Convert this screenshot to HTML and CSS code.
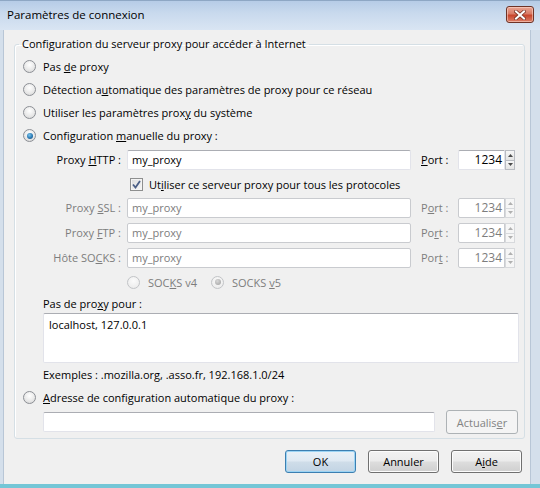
FILE: index.html
```html
<!DOCTYPE html>
<html lang="fr">
<head>
<meta charset="utf-8">
<title>Paramètres de connexion</title>
<link rel="stylesheet" href="styles.css">
</head>
<body>
<div class="window">
  <div class="titlebar">
    <span class="title">Paramètres de connexion</span>
    <span class="close">
      <svg width="12" height="10" viewBox="0 0 12 10">
        <path d="M2 1.5 L10 8.5 M10 1.5 L2 8.5" stroke="#7a3426" stroke-width="3.6" stroke-linecap="square"/>
        <path d="M2 1.5 L10 8.5 M10 1.5 L2 8.5" stroke="#ffffff" stroke-width="2" stroke-linecap="square"/>
      </svg>
    </span>
  </div>
  <div class="frame">
    <div class="client">
      <fieldset class="group">
        <legend>Configuration du serveur proxy pour accéder à Internet</legend>
        <div class="opt"><span class="radio"></span><span>Pas <u>d</u>e proxy</span></div>
        <div class="opt"><span class="radio"></span><span>Détection a<u>u</u>tomatique des paramètres de proxy pour ce réseau</span></div>
        <div class="opt"><span class="radio"></span><span>Utiliser les paramètres prox<u>y</u> du système</span></div>
        <div class="opt"><span class="radio on"><span class="dot"></span></span><span>Configuration <u>m</u>anuelle du proxy :</span></div>

        <div class="proxy-grid">
          <span class="plabel">Proxy <u>H</u>TTP :</span>
          <span class="field">my_proxy</span>
          <span class="port-label"><u>P</u>ort :</span>
          <span class="port"><span class="port-input">1234</span><span class="spin"><span class="sb"><svg width="5" height="3" viewBox="0 0 5 3"><path d="M0 3 L2.5 0 L5 3Z" fill="#4a4a4a"/></svg></span><span class="sb"><svg width="5" height="3" viewBox="0 0 5 3"><path d="M0 0 L2.5 3 L5 0Z" fill="#4a4a4a"/></svg></span></span></span>

          <span class="check-row"><span class="checkbox"><svg width="9" height="9" viewBox="0 0 9 9"><path d="M1 4.5 L3.5 7.5 L8 1" fill="none" stroke="#4b5f86" stroke-width="1.8"/></svg></span><span>Ut<u>i</u>liser ce serveur proxy pour tous les protocoles</span></span>

          <span class="plabel dis">Proxy <u>S</u>SL :</span>
          <span class="field dis">my_proxy</span>
          <span class="port-label dis">P<u>o</u>rt :</span>
          <span class="port dis"><span class="port-input">1234</span><span class="spin"><span class="sb"><svg width="5" height="3" viewBox="0 0 5 3"><path d="M0 3 L2.5 0 L5 3Z" fill="#b0b0b0"/></svg></span><span class="sb"><svg width="5" height="3" viewBox="0 0 5 3"><path d="M0 0 L2.5 3 L5 0Z" fill="#b0b0b0"/></svg></span></span></span>

          <span class="plabel dis">Proxy <u>F</u>TP :</span>
          <span class="field dis">my_proxy</span>
          <span class="port-label dis">Po<u>r</u>t :</span>
          <span class="port dis"><span class="port-input">1234</span><span class="spin"><span class="sb"><svg width="5" height="3" viewBox="0 0 5 3"><path d="M0 3 L2.5 0 L5 3Z" fill="#b0b0b0"/></svg></span><span class="sb"><svg width="5" height="3" viewBox="0 0 5 3"><path d="M0 0 L2.5 3 L5 0Z" fill="#b0b0b0"/></svg></span></span></span>

          <span class="plabel dis">Hôte SO<u>C</u>KS :</span>
          <span class="field dis">my_proxy</span>
          <span class="port-label dis">Por<u>t</u> :</span>
          <span class="port dis"><span class="port-input">1234</span><span class="spin"><span class="sb"><svg width="5" height="3" viewBox="0 0 5 3"><path d="M0 3 L2.5 0 L5 3Z" fill="#b0b0b0"/></svg></span><span class="sb"><svg width="5" height="3" viewBox="0 0 5 3"><path d="M0 0 L2.5 3 L5 0Z" fill="#b0b0b0"/></svg></span></span></span>
        </div>

        <div class="socks-row">
          <span class="sopt v4"><span class="radio dis"></span><span>SOC<u>K</u>S v4</span></span>
          <span class="sopt"><span class="radio dis on"><span class="dot"></span></span><span>SOCKS <u>v</u>5</span></span>
        </div>

        <div class="noproxy">
          <div class="np-label">Pas de pro<u>x</u>y pour :</div>
          <div class="textarea">localhost, 127.0.0.1</div>
          <div class="examples">Exemples : .mozilla.org, .asso.fr, 192.168.1.0/24</div>
        </div>

        <div class="opt auto"><span class="radio"></span><span><u>A</u>dresse de configuration automatique du proxy :</span></div>
        <div class="auto-row">
          <span class="field wide"></span>
          <span class="btn disabled">Actualis<u>e</u>r</span>
        </div>
      </fieldset>

      <div class="buttons">
        <span class="btn default">OK</span>
        <span class="btn">Annuler</span>
        <span class="btn">A<u>i</u>de</span>
      </div>
    </div>
  </div>
</div>
</body>
</html>
```

FILE: styles.css
```css
* { box-sizing: border-box; }

body {
  margin: 0;
  width: 540px;
  height: 488px;
  overflow: hidden;
  font-family: "Open Sans", "Noto Sans", sans-serif;
  font-size: 11px;
  color: #1b1b1b;
  background: #cbdaec;
}

u { text-decoration: underline; text-underline-offset: 1px; }

.window {
  width: 540px;
  height: 488px;
  display: flex;
  flex-direction: column;
  border-bottom: 4px solid #74c6d6;
  background: #c9d9ec;
}

.titlebar {
  height: 30px;
  flex: none;
  display: flex;
  justify-content: space-between;
  align-items: flex-start;
  padding: 5px 6px 0 7px;
  background: linear-gradient(#b6cce7 0%, #c8d9ed 40%, #d9e5f3 100%);
  border-top: 1px solid #8ea7c4;
}

.title {
  font-size: 11.5px;
  line-height: 18px;
  color: #000;
}

.close {
  width: 28px;
  height: 17px;
  border: 1px solid #6e3327;
  border-radius: 3px;
  background: linear-gradient(#e9a594 0%, #d97b66 45%, #c8452c 55%, #dc7f68 100%);
  box-shadow: inset 0 0 0 1px rgba(255, 220, 210, 0.55);
  display: flex;
  align-items: center;
  justify-content: center;
}

.frame {
  flex: 1;
  padding: 0 9px 0 3px;
  background: #d4dfeb;
}

.client {
  height: 100%;
  background: #f0f0f0;
  padding: 6px 7px 0 10px;
  border-left: 1px solid #b8c6d6;
  border-right: 1px solid #b8c6d6;
}

/* group box */
.group {
  margin: 0;
  width: 511px;
  height: 403px;
  padding: 3px 4px 0 8px;
  border: 1px solid #d5dfe5;
  border-radius: 3px;
  box-shadow: inset 1px 1px 0 #fff;
}

.group legend {
  margin-left: -4px;
  padding: 0 3px;
  line-height: 16px;
  color: #000;
}

.opt {
  height: 23px;
  display: flex;
  align-items: center;
  gap: 7px;
  color: #000;
}

.radio {
  width: 13px;
  height: 13px;
  flex: none;
  border-radius: 50%;
  border: 1px solid #8c8f95;
  background: radial-gradient(circle at 50% 35%, #ffffff 0%, #e9e9e9 55%, #d3d3d3 100%);
  display: flex;
  align-items: center;
  justify-content: center;
}

.radio .dot {
  width: 6px;
  height: 6px;
  border-radius: 50%;
  background: radial-gradient(circle at 40% 35%, #7cc6ee 0%, #2a79b4 55%, #15466f 100%);
}

.radio.dis {
  border-color: #c2c4c7;
  background: radial-gradient(circle at 50% 35%, #fbfbfb 0%, #eeeeee 70%, #e4e4e4 100%);
}

.radio.dis .dot {
  background: radial-gradient(circle at 40% 35%, #d8d8d8 0%, #b5b5b5 60%, #9d9d9d 100%);
}

/* proxy grid */
.proxy-grid {
  margin-top: 3px;
  display: grid;
  grid-template-columns: 104px 284px 47px 57px;
  grid-template-rows: 20px 18px 20px 20px 20px;
  row-gap: 5px;
}

.plabel {
  text-align: right;
  padding-right: 6px;
  line-height: 20px;
  color: #000;
  white-space: nowrap;
}

.port-label {
  padding-left: 10px;
  line-height: 20px;
  color: #000;
}

.dis { color: #7d7d7d; }
.plabel.dis, .port-label.dis { color: #7d7d7d; }

.field {
  height: 20px;
  line-height: 18px;
  padding-left: 4px;
  background: #fff;
  border: 1px solid #e2e3ea;
  border-top-color: #abadb3;
  border-radius: 2px;
  color: #000;
}

.field.dis {
  border-color: #c9cbcf;
  background: #fff;
  color: #7d7d7d;
}

.port {
  display: flex;
  height: 20px;
}

.port-input {
  width: 47px;
  height: 20px;
  line-height: 18px;
  text-align: right;
  padding-right: 2px;
  font-size: 12px;
  background: #fff;
  border: 1px solid #e2e3ea;
  border-top-color: #abadb3;
  border-radius: 2px 0 0 2px;
  color: #000;
}

.port.dis .port-input {
  border-color: #c9cbcf;
  color: #7d7d7d;
}

.spin {
  width: 10px;
  display: flex;
  flex-direction: column;
}

.sb {
  flex: 1;
  display: flex;
  align-items: center;
  justify-content: center;
  border: 1px solid #b9bcc2;
  background: linear-gradient(#f7f7f7, #e4e4e4);
}

.sb + .sb { border-top: none; }

.port.dis .sb {
  border-color: #d7d9dc;
  background: #f6f6f6;
}

.check-row {
  grid-column: 2 / 5;
  display: flex;
  align-items: center;
  gap: 6px;
  padding-left: 3px;
  color: #000;
}

.checkbox {
  width: 13px;
  height: 13px;
  flex: none;
  border: 1px solid #8e8f8f;
  background: linear-gradient(135deg, #dcdcdc, #f7f7f7);
  box-shadow: inset 0 0 0 1px #f4f4f4;
  display: flex;
  align-items: center;
  justify-content: center;
}

/* socks */
.socks-row {
  height: 28px;
  display: flex;
  align-items: center;
  padding-left: 104px;
  color: #7d7d7d;
}

.sopt {
  display: flex;
  align-items: center;
  gap: 8px;
}

.sopt.v4 { width: 84px; }

/* no proxy */
.noproxy {
  padding-left: 20px;
}

.np-label {
  line-height: 16px;
  color: #000;
}

.textarea {
  margin-top: 1px;
  width: 476px;
  height: 50px;
  padding: 3px 5px;
  line-height: 16px;
  background: #fff;
  border: 1px solid #e2e3ea;
  border-top-color: #abadb3;
  border-radius: 2px;
  color: #000;
}

.examples {
  height: 23px;
  line-height: 23px;
  color: #000;
}

.opt.auto { height: 22px; }

.auto-row {
  margin-top: 2px;
  padding-left: 20px;
  display: flex;
  align-items: center;
  gap: 11px;
}

.field.wide { width: 392px; }

/* buttons */
.btn {
  display: flex;
  align-items: center;
  justify-content: center;
  width: 71px;
  height: 23px;
  border: 1px solid #707070;
  border-radius: 3px;
  background: linear-gradient(#f2f2f2 0%, #ebebeb 48%, #dddddd 52%, #cfcfcf 100%);
  box-shadow: inset 0 0 0 1px #fcfcfc;
  color: #000;
}

.btn.disabled {
  width: 72px;
  height: 24px;
  border-color: #adb2b5;
  background: #f4f4f4;
  box-shadow: none;
  color: #838383;
}

.btn.default {
  border-color: #3c7fb1;
  background: linear-gradient(#e9f1f7 0%, #dfe9f2 48%, #cfdde9 52%, #c2d4e4 100%);
  box-shadow: inset 0 0 0 1px #9cd4f4;
}

.buttons {
  margin-top: 11px;
  display: flex;
  justify-content: flex-end;
  gap: 12px;
  padding-right: 1px;
}
```
